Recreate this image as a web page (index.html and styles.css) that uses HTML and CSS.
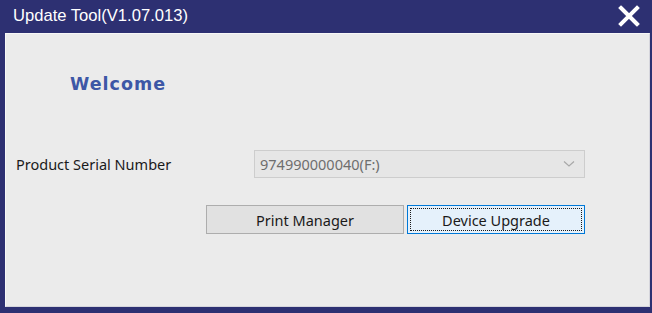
FILE: index.html
```html
<!DOCTYPE html>
<html>
<head>
<meta charset="utf-8">
<link rel="stylesheet" href="styles.css">
</head>
<body>
<div class="window">
  <div class="titlebar">
    <span class="title">Update Tool(V1.07.013)</span>
    <svg class="close" width="22" height="22" viewBox="0 0 22 22">
      <path d="M3 3 L19 19 M19 3 L3 19" stroke="#ffffff" stroke-width="4" stroke-linecap="square" fill="none"/>
    </svg>
  </div>
  <div class="client">
    <div class="welcome">Welcome</div>
    <div class="row">
      <span class="label">Product Serial Number</span>
      <div class="combo">
        <span class="combo-text">974990000040(F:)</span>
        <svg class="chev" width="12" height="8" viewBox="0 0 12 8">
          <path d="M1 1.5 L6 6 L11 1.5" stroke="#a8a8a8" stroke-width="1.2" fill="none"/>
        </svg>
      </div>
    </div>
    <div class="buttons">
      <button class="btn">Print Manager</button>
      <button class="btn focus"><span class="focus-rect">Device Upgrade</span></button>
    </div>
  </div>
</div>
</body>
</html>
```

FILE: styles.css
```css
html, body {
  margin: 0;
  padding: 0;
  width: 652px;
  height: 313px;
  overflow: hidden;
  background: #2d3072;
}
.window {
  width: 652px;
  height: 313px;
  box-sizing: border-box;
  background: #2d3072;
  padding: 0 2px 6px 5px;
  display: flex;
  flex-direction: column;
}
.titlebar {
  height: 33px;
  flex: none;
  display: flex;
  align-items: center;
  justify-content: space-between;
  padding: 0 10px 1px 8px;
  box-sizing: border-box;
}
.title {
  color: #ffffff;
  font-family: "Liberation Sans", Arial, sans-serif;
  font-size: 16.6px;
}
.client {
  flex: 1;
  background: #ebebeb;
  border: 1px solid #f7f7f7;
  border-right-color: #d5d5dc;
  border-bottom-color: #d5d5dc;
  display: flex;
  flex-direction: column;
}
.welcome {
  margin: 39px 0 0 64px;
  color: #3d57a6;
  font-family: "DejaVu Sans", Verdana, sans-serif;
  font-weight: bold;
  font-size: 17.5px;
  letter-spacing: 1px;
  height: 22px;
  line-height: 22px;
}
.row {
  display: flex;
  align-items: center;
  margin-top: 55px;
  height: 28px;
}
.label {
  margin-left: 10px;
  width: 238px;
  font-family: "Noto Sans", "Open Sans", sans-serif;
  font-size: 14.5px;
  color: #1a1a1a;
}
.combo {
  width: 331px;
  height: 28px;
  box-sizing: border-box;
  border: 1px solid #cdcdcd;
  background: #e6e6e6;
  display: flex;
  align-items: center;
  justify-content: space-between;
  padding: 0 9px 0 5px;
}
.combo-text {
  font-family: "Noto Sans", "Open Sans", sans-serif;
  font-size: 14.5px;
  color: #6e6e6e;
}
.buttons {
  display: flex;
  margin: 27px 0 0 200px;
  gap: 3px;
}
.btn {
  height: 29px;
  box-sizing: border-box;
  border: 1px solid #adadad;
  background: #e1e1e1;
  font-family: "Noto Sans", "Open Sans", sans-serif;
  font-size: 14.5px;
  color: #1a1a1a;
  padding: 0;
  width: 198px;
  display: flex;
  align-items: center;
  justify-content: center;
}
.btn.focus {
  width: 178px;
  background: #e5f1fb;
  border-color: #0078d7;
  padding: 2px;
}
.focus-rect {
  flex: 1;
  align-self: stretch;
  border: 1px dotted #1a1a1a;
  display: flex;
  align-items: center;
  justify-content: center;
}
```
